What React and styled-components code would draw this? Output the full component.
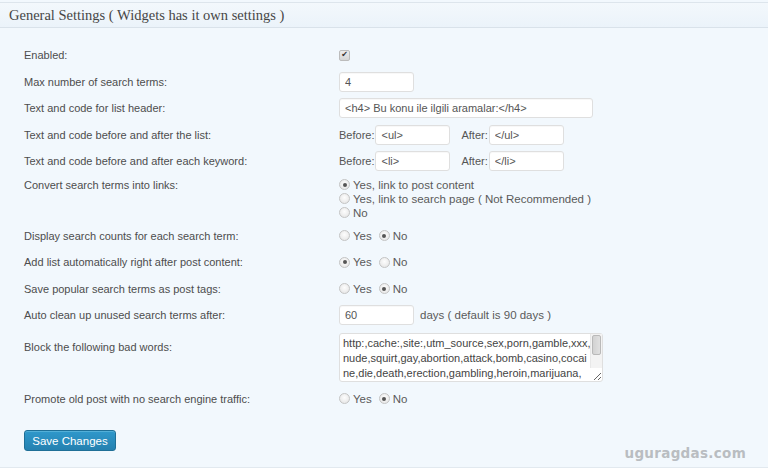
import React from "react";
import styled, { createGlobalStyle } from "styled-components";

const GlobalStyle = createGlobalStyle`
  html, body {
    margin: 0;
    padding: 0;
    background: #f2f8fd;
  }
  #root {
    min-height: 468px;
  }
`;

const Page = styled.div`
  position: relative;
  width: 768px;
  height: 468px;
  overflow: hidden;
  padding-top: 2px;
  box-sizing: border-box;
  background: #f2f8fd;
  font-family: "Liberation Sans", Arial, sans-serif;
  font-size: 11px;
  color: #4a4a4a;
  border-bottom: 1px solid #e2e9ef;
`;

const Header = styled.div`
  height: 24px;
  border-top: 1px solid #dde5ec;
  border-bottom: 1px solid #d9e2ea;
  background: linear-gradient(#f3f8fc, #ebf3fa);
  display: flex;
  align-items: center;
  padding-left: 9px;
`;

const Title = styled.h3`
  margin: 0;
  font-family: "Liberation Serif", "Times New Roman", serif;
  font-weight: normal;
  font-size: 14.5px;
  color: #464646;
  padding-top: 1px;
`;

const Form = styled.div`
  padding: 14px 0 0 24px;
`;

const Row = styled.div`
  display: grid;
  grid-template-columns: 315px 1fr;
  align-items: ${(p) => (p.$top ? "start" : "center")};
  padding: ${(p) => (p.$pad ? p.$pad : "3.25px 0")};
  min-height: 20px;
`;

const Label = styled.div`
  line-height: 14px;
  color: #4d4d4d;
  padding-top: ${(p) => p.$offset || 0}px;
`;

const Control = styled.div`
  display: flex;
  align-items: center;
  line-height: 14px;
  color: #555;
`;

const Stack = styled.div`
  display: flex;
  flex-direction: column;
`;

const TextInput = styled.input`
  box-sizing: border-box;
  height: 20px;
  width: ${(p) => p.$w}px;
  margin: 0;
  padding: 0 5px;
  border: 1px solid #dfdfdf;
  border-radius: 3px;
  background: #fff;
  font-family: "Liberation Sans", Arial, sans-serif;
  font-size: 11px;
  color: #555;
  outline: none;
  box-shadow: inset 0 1px 1px rgba(0, 0, 0, 0.03);
`;

const Field = styled.span`
  display: inline-flex;
  align-items: center;
  gap: 1px;
  margin-left: ${(p) => p.$ml || 0}px;
`;

const Check = styled.span`
  width: 11px;
  height: 11px;
  box-sizing: border-box;
  border: 1px solid #bcbcbc;
  border-radius: 2px;
  background: linear-gradient(#ececec, #d6d6d6);
  display: inline-flex;
  align-items: center;
  justify-content: center;
  font-size: 8px;
  line-height: 1;
  color: #333;
  font-family: "DejaVu Sans", sans-serif;
`;

const RadioDot = styled.span`
  width: 11px;
  height: 11px;
  box-sizing: border-box;
  border-radius: 50%;
  border: 1px solid #c4c4c4;
  background: radial-gradient(circle at 50% 40%, #fdfdfd, #e2e2e2);
  display: inline-flex;
  align-items: center;
  justify-content: center;
  margin-right: 3px;
  &::after {
    content: "";
    width: 4px;
    height: 4px;
    border-radius: 50%;
    background: #555;
    display: ${(p) => (p.$on ? "block" : "none")};
  }
`;

const Option = styled.label`
  display: inline-flex;
  align-items: center;
  height: 14px;
  margin-right: 7px;
  color: #5a5a5a;
  font-size: 11.5px;
`;

const Note = styled.span`
  margin-left: 6px;
  color: #5a5a5a;
  font-size: 11.5px;
`;

const AreaWrap = styled.div`
  position: relative;
  width: 264px;
  height: 49px;
`;

const Area = styled.textarea`
  box-sizing: border-box;
  width: 264px;
  height: 49px;
  margin: 0;
  padding: 2px 14px 2px 3px;
  border: 1px solid #dfdfdf;
  border-radius: 3px;
  background: #fff;
  font-family: "Liberation Sans", Arial, sans-serif;
  font-size: 11px;
  line-height: 15px;
  color: #444;
  white-space: pre;
  overflow: hidden;
  outline: none;
`;

const ScrollTrack = styled.div`
  position: absolute;
  top: 1px;
  right: 1px;
  width: 12px;
  height: 34px;
  background: #f3f3f3;
  border-left: 1px solid #e8e8e8;
  box-sizing: border-box;
  padding: 1px 1px 0 1px;
`;

const ScrollThumb = styled.div`
  height: 20px;
  border: 1px solid #b9b9b9;
  border-radius: 2px;
  background: linear-gradient(90deg, #d2d2d2, #e0e0e0);
  box-sizing: border-box;
`;

const Submit = styled.div`
  padding: 18px 0 0 24px;
`;

const Button = styled.button`
  height: 21px;
  width: 92px;
  padding: 0;
  border: 1px solid #1f6f97;
  border-radius: 3px;
  background: linear-gradient(#2f98cb, #2581b0);
  color: #fff;
  font-family: "Liberation Sans", Arial, sans-serif;
  font-size: 11.5px;
  box-shadow: inset 0 1px 0 rgba(120, 200, 230, 0.5);
`;

const Watermark = styled.div`
  position: absolute;
  right: 22px;
  bottom: 6px;
  font-family: "DejaVu Sans", sans-serif;
  font-weight: bold;
  font-size: 13.5px;
  letter-spacing: 0.3px;
  color: #b9bdc1;
`;

const badWords =
  "http:,cache:,site:,utm_source,sex,porn,gamble,xxx,\nnude,squirt,gay,abortion,attack,bomb,casino,cocai\nne,die,death,erection,gambling,heroin,marijuana,\nmasturbation,pedophile,penis,poker,pussy,\nterrorist,viagra,vagina,weapons";

function Radio({ on, children }) {
  return (
    <Option>
      <RadioDot $on={on} />
      {children}
    </Option>
  );
}

function YesNo({ yes }) {
  return (
    <Control>
      <Radio on={yes}>Yes</Radio>
      <Radio on={!yes}>No</Radio>
    </Control>
  );
}

export default function App() {
  return (
    <Page>
      <GlobalStyle />
      <Header>
        <Title>General Settings ( Widgets has it own settings )</Title>
      </Header>
      <Form>
        <Row>
          <Label>Enabled:</Label>
          <Control>
            <Check>✔</Check>
          </Control>
        </Row>
        <Row>
          <Label>Max number of search terms:</Label>
          <Control>
            <TextInput $w={75} defaultValue="4" />
          </Control>
        </Row>
        <Row>
          <Label>Text and code for list header:</Label>
          <Control>
            <TextInput $w={254} defaultValue="<h4> Bu konu ile ilgili aramalar:</h4>" />
          </Control>
        </Row>
        <Row>
          <Label>Text and code before and after the list:</Label>
          <Control>
            <Field>
              Before:<TextInput $w={75} defaultValue="<ul>" />
            </Field>
            <Field $ml={11}>
              After:<TextInput $w={75} defaultValue="</ul>" />
            </Field>
          </Control>
        </Row>
        <Row>
          <Label>Text and code before and after each keyword:</Label>
          <Control>
            <Field>
              Before:<TextInput $w={75} defaultValue="<li>" />
            </Field>
            <Field $ml={11}>
              After:<TextInput $w={75} defaultValue="</li>" />
            </Field>
          </Control>
        </Row>
        <Row $top $pad="3px 0">
          <Label>Convert search terms into links:</Label>
          <Stack>
            <Radio on>Yes, link to post content</Radio>
            <Radio>Yes, link to search page ( Not Recommended )</Radio>
            <Radio>No</Radio>
          </Stack>
        </Row>
        <Row>
          <Label>Display search counts for each search term:</Label>
          <YesNo yes={false} />
        </Row>
        <Row>
          <Label>Add list automatically right after post content:</Label>
          <YesNo yes />
        </Row>
        <Row>
          <Label>Save popular search terms as post tags:</Label>
          <YesNo yes={false} />
        </Row>
        <Row>
          <Label>Auto clean up unused search terms after:</Label>
          <Control>
            <TextInput $w={75} defaultValue="60" />
            <Note>days ( default is 90 days )</Note>
          </Control>
        </Row>
        <Row $top $pad="4px 0">
          <Label $offset={7}>Block the following bad words:</Label>
          <Control>
            <AreaWrap>
              <Area defaultValue={badWords} spellCheck={false} />
              <ScrollTrack>
                <ScrollThumb />
              </ScrollTrack>
            </AreaWrap>
          </Control>
        </Row>
        <Row>
          <Label>Promote old post with no search engine traffic:</Label>
          <YesNo yes={false} />
        </Row>
      </Form>
      <Submit>
        <Button>Save Changes</Button>
      </Submit>
      <Watermark>uguragdas.com</Watermark>
    </Page>
  );
}
